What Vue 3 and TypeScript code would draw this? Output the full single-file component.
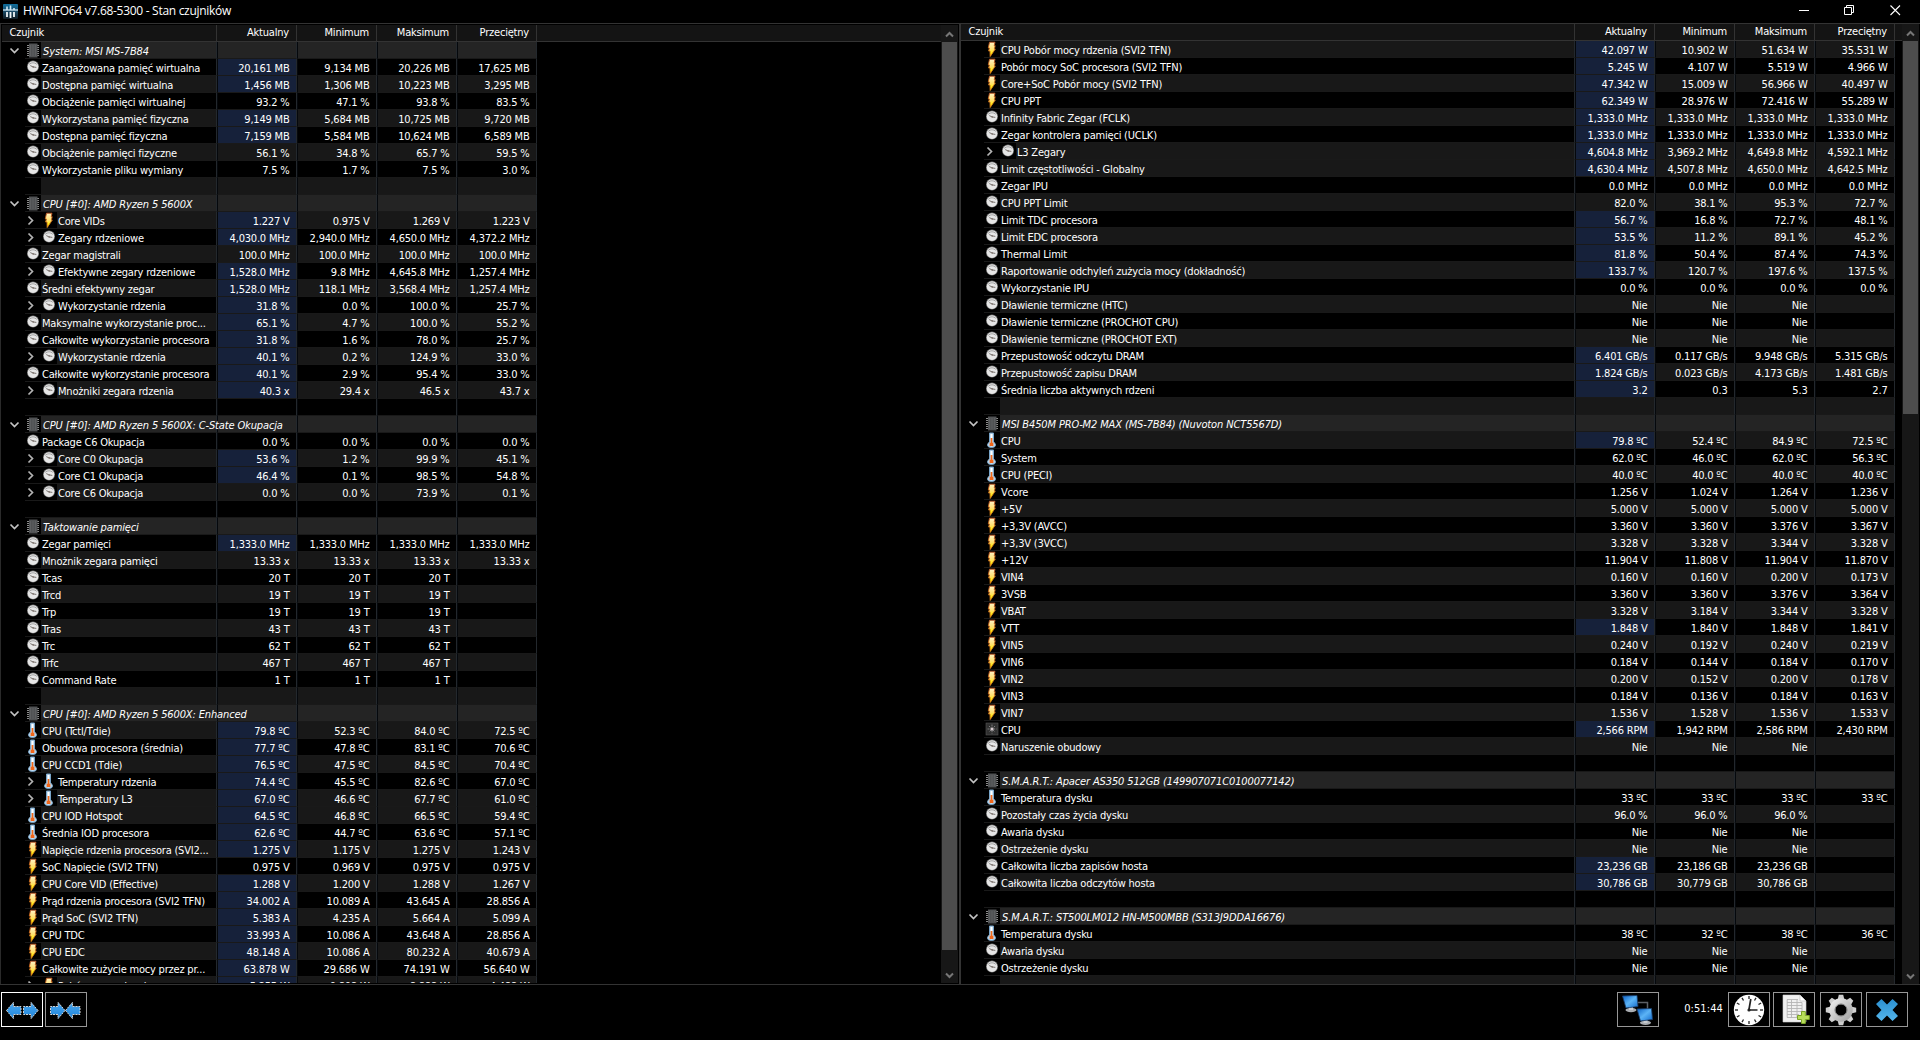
<script setup lang="ts">
type Kind = 'section' | 'clock' | 'bolt' | 'temp' | 'fan' | 'blank'
interface Row {
  kind: Kind
  name: string
  values: string[]
  hot: boolean
  child: boolean
  shade: 'dark' | 'light' | 'head'
}

const columns = ['Aktualny', 'Minimum', 'Maksimum', 'Przeciętny']
const kinds: Record<string, Kind> = { S: 'section', C: 'clock', B: 'bolt', T: 'temp', F: 'fan' }

// Line format: "<flags>|name|v1|v2|v3|v4"; flags: kind letter, ">" expandable, "*" highlighted value.
// An expandable group with an odd number of hidden children flips the striping below it.
function parse(source: string, flipFrom: number): Row[] {
  return source.trim().split('\n').map((line, i) => {
    const [flags, name = '', ...values] = line.trim().split('|')
    const kind: Kind = kinds[flags[0]] ?? 'blank'
    const even = (i >= flipFrom ? i + 1 : i) % 2 === 0
    return {
      kind,
      name,
      values: [0, 1, 2, 3].map(n => values[n] ?? ''),
      hot: flags.includes('*'),
      child: flags.includes('>'),
      shade: kind === 'section' ? 'head' : even ? 'light' : 'dark',
    }
  })
}

const left = parse(`
S|System: MSI MS-7B84
C*|Zaangażowana pamięć wirtualna|20,161 MB|9,134 MB|20,226 MB|17,625 MB
C*|Dostępna pamięć wirtualna|1,456 MB|1,306 MB|10,223 MB|3,295 MB
C|Obciążenie pamięci wirtualnej|93.2 %|47.1 %|93.8 %|83.5 %
C*|Wykorzystana pamięć fizyczna|9,149 MB|5,684 MB|10,725 MB|9,720 MB
C*|Dostępna pamięć fizyczna|7,159 MB|5,584 MB|10,624 MB|6,589 MB
C|Obciążenie pamięci fizyczne|56.1 %|34.8 %|65.7 %|59.5 %
C|Wykorzystanie pliku wymiany|7.5 %|1.7 %|7.5 %|3.0 %
-
S|CPU [#0]: AMD Ryzen 5 5600X
B>*|Core VIDs|1.227 V|0.975 V|1.269 V|1.223 V
C>*|Zegary rdzeniowe|4,030.0 MHz|2,940.0 MHz|4,650.0 MHz|4,372.2 MHz
C|Zegar magistrali|100.0 MHz|100.0 MHz|100.0 MHz|100.0 MHz
C>*|Efektywne zegary rdzeniowe|1,528.0 MHz|9.8 MHz|4,645.8 MHz|1,257.4 MHz
C*|Średni efektywny zegar|1,528.0 MHz|118.1 MHz|3,568.4 MHz|1,257.4 MHz
C>*|Wykorzystanie rdzenia|31.8 %|0.0 %|100.0 %|25.7 %
C*|Maksymalne wykorzystanie proc...|65.1 %|4.7 %|100.0 %|55.2 %
C*|Całkowite wykorzystanie procesora|31.8 %|1.6 %|78.0 %|25.7 %
C>*|Wykorzystanie rdzenia|40.1 %|0.2 %|124.9 %|33.0 %
C*|Całkowite wykorzystanie procesora|40.1 %|2.9 %|95.4 %|33.0 %
C>*|Mnożniki zegara rdzenia|40.3 x|29.4 x|46.5 x|43.7 x
-
S|CPU [#0]: AMD Ryzen 5 5600X: C-State Okupacja
C|Package C6 Okupacja|0.0 %|0.0 %|0.0 %|0.0 %
C>*|Core C0 Okupacja|53.6 %|1.2 %|99.9 %|45.1 %
C>*|Core C1 Okupacja|46.4 %|0.1 %|98.5 %|54.8 %
C>|Core C6 Okupacja|0.0 %|0.0 %|73.9 %|0.1 %
-
S|Taktowanie pamięci
C*|Zegar pamięci|1,333.0 MHz|1,333.0 MHz|1,333.0 MHz|1,333.0 MHz
C|Mnożnik zegara pamięci|13.33 x|13.33 x|13.33 x|13.33 x
C|Tcas|20 T|20 T|20 T
C|Trcd|19 T|19 T|19 T
C|Trp|19 T|19 T|19 T
C|Tras|43 T|43 T|43 T
C|Trc|62 T|62 T|62 T
C|Trfc|467 T|467 T|467 T
C|Command Rate|1 T|1 T|1 T
-
S|CPU [#0]: AMD Ryzen 5 5600X: Enhanced
T*|CPU (Tctl/Tdie)|79.8 ºC|52.3 ºC|84.0 ºC|72.5 ºC
T*|Obudowa procesora (średnia)|77.7 ºC|47.8 ºC|83.1 ºC|70.6 ºC
T*|CPU CCD1 (Tdie)|76.5 ºC|47.5 ºC|84.5 ºC|70.4 ºC
T>*|Temperatury rdzenia|74.4 ºC|45.5 ºC|82.6 ºC|67.0 ºC
T>*|Temperatury L3|67.0 ºC|46.6 ºC|67.7 ºC|61.0 ºC
T*|CPU IOD Hotspot|64.5 ºC|46.8 ºC|66.5 ºC|59.4 ºC
T*|Średnia IOD procesora|62.6 ºC|44.7 ºC|63.6 ºC|57.1 ºC
B*|Napięcie rdzenia procesora (SVI2...|1.275 V|1.175 V|1.275 V|1.243 V
B|SoC Napięcie (SVI2 TFN)|0.975 V|0.969 V|0.975 V|0.975 V
B*|CPU Core VID (Effective)|1.288 V|1.200 V|1.288 V|1.267 V
B*|Prąd rdzenia procesora (SVI2 TFN)|34.002 A|10.089 A|43.645 A|28.856 A
B*|Prąd SoC (SVI2 TFN)|5.383 A|4.235 A|5.664 A|5.099 A
B*|CPU TDC|33.993 A|10.086 A|43.648 A|28.856 A
B*|CPU EDC|48.148 A|10.086 A|80.232 A|40.679 A
B*|Całkowite zużycie mocy przez pr...|63.878 W|29.686 W|74.191 W|56.640 W
B>*|Pobór mocy rdzenia|5.255 W|0.808 W|8.888 W|4.488 W
`, 45)

const right = parse(`
B*|CPU Pobór mocy rdzenia (SVI2 TFN)|42.097 W|10.902 W|51.634 W|35.531 W
B*|Pobór mocy SoC procesora (SVI2 TFN)|5.245 W|4.107 W|5.519 W|4.966 W
B*|Core+SoC Pobór mocy (SVI2 TFN)|47.342 W|15.009 W|56.966 W|40.497 W
B*|CPU PPT|62.349 W|28.976 W|72.416 W|55.289 W
C*|Infinity Fabric Zegar (FCLK)|1,333.0 MHz|1,333.0 MHz|1,333.0 MHz|1,333.0 MHz
C*|Zegar kontrolera pamięci (UCLK)|1,333.0 MHz|1,333.0 MHz|1,333.0 MHz|1,333.0 MHz
C>*|L3 Zegary|4,604.8 MHz|3,969.2 MHz|4,649.8 MHz|4,592.1 MHz
C*|Limit częstotliwości - Globalny|4,630.4 MHz|4,507.8 MHz|4,650.0 MHz|4,642.5 MHz
C|Zegar IPU|0.0 MHz|0.0 MHz|0.0 MHz|0.0 MHz
C|CPU PPT Limit|82.0 %|38.1 %|95.3 %|72.7 %
C*|Limit TDC procesora|56.7 %|16.8 %|72.7 %|48.1 %
C*|Limit EDC procesora|53.5 %|11.2 %|89.1 %|45.2 %
C*|Thermal Limit|81.8 %|50.4 %|87.4 %|74.3 %
C*|Raportowanie odchyleń zużycia mocy (dokładność)|133.7 %|120.7 %|197.6 %|137.5 %
C|Wykorzystanie IPU|0.0 %|0.0 %|0.0 %|0.0 %
C|Dławienie termiczne (HTC)|Nie|Nie|Nie
C|Dławienie termiczne (PROCHOT CPU)|Nie|Nie|Nie
C|Dławienie termiczne (PROCHOT EXT)|Nie|Nie|Nie
C*|Przepustowość odczytu DRAM|6.401 GB/s|0.117 GB/s|9.948 GB/s|5.315 GB/s
C*|Przepustowość zapisu DRAM|1.824 GB/s|0.023 GB/s|4.173 GB/s|1.481 GB/s
C*|Średnia liczba aktywnych rdzeni|3.2|0.3|5.3|2.7
-
S|MSI B450M PRO-M2 MAX (MS-7B84) (Nuvoton NCT5567D)
T*|CPU|79.8 ºC|52.4 ºC|84.9 ºC|72.5 ºC
T|System|62.0 ºC|46.0 ºC|62.0 ºC|56.3 ºC
T|CPU (PECI)|40.0 ºC|40.0 ºC|40.0 ºC|40.0 ºC
B|Vcore|1.256 V|1.024 V|1.264 V|1.236 V
B|+5V|5.000 V|5.000 V|5.000 V|5.000 V
B|+3,3V (AVCC)|3.360 V|3.360 V|3.376 V|3.367 V
B|+3,3V (3VCC)|3.328 V|3.328 V|3.344 V|3.328 V
B|+12V|11.904 V|11.808 V|11.904 V|11.870 V
B|VIN4|0.160 V|0.160 V|0.200 V|0.173 V
B|3VSB|3.360 V|3.360 V|3.376 V|3.364 V
B|VBAT|3.328 V|3.184 V|3.344 V|3.328 V
B*|VTT|1.848 V|1.840 V|1.848 V|1.841 V
B|VIN5|0.240 V|0.192 V|0.240 V|0.219 V
B|VIN6|0.184 V|0.144 V|0.184 V|0.170 V
B|VIN2|0.200 V|0.152 V|0.200 V|0.178 V
B|VIN3|0.184 V|0.136 V|0.184 V|0.163 V
B|VIN7|1.536 V|1.528 V|1.536 V|1.533 V
F*|CPU|2,566 RPM|1,942 RPM|2,586 RPM|2,430 RPM
C|Naruszenie obudowy|Nie|Nie|Nie
-
S|S.M.A.R.T.: Apacer AS350 512GB (149907071C0100077142)
T|Temperatura dysku|33 ºC|33 ºC|33 ºC|33 ºC
C|Pozostały czas życia dysku|96.0 %|96.0 %|96.0 %
C|Awaria dysku|Nie|Nie|Nie
C|Ostrzeżenie dysku|Nie|Nie|Nie
C*|Całkowita liczba zapisów hosta|23,236 GB|23,186 GB|23,236 GB
C*|Całkowita liczba odczytów hosta|30,786 GB|30,779 GB|30,786 GB
-
S|S.M.A.R.T.: ST500LM012 HN-M500MBB (S313J9DDA16676)
T|Temperatura dysku|38 ºC|32 ºC|38 ºC|36 ºC
C|Awaria dysku|Nie|Nie|Nie
C|Ostrzeżenie dysku|Nie|Nie|Nie
-
`, 7)

const panes = [
  { id: 'left', rows: left },
  { id: 'right', rows: right },
]
const ticks = Array.from({ length: 12 }, (_, i) => i * 30)
const teeth = Array.from({ length: 8 }, (_, i) => i * 45)
</script>

<template>
  <div class="window">
    <svg class="defs" width="0" height="0">
      <defs>
        <linearGradient id="gBolt" x1="0" y1="0" x2="0" y2="1">
          <stop offset="0" stop-color="#fff3c4" /><stop offset=".5" stop-color="#ffe070" /><stop offset=".8" stop-color="#fff000" /><stop offset="1" stop-color="#f08a10" />
        </linearGradient>
        <linearGradient id="gBoltEdge" x1="0" y1="0" x2="0" y2="1">
          <stop offset="0" stop-color="#b9501e" /><stop offset="1" stop-color="#e08a18" />
        </linearGradient>
        <linearGradient id="gArrow" x1="0" y1="0" x2="0" y2="1">
          <stop offset="0" stop-color="#4aa6ee" /><stop offset="1" stop-color="#1f86dc" />
        </linearGradient>
        <linearGradient id="gScreen" x1="0" y1="0" x2="1" y2="1">
          <stop offset="0" stop-color="#0a5fc4" /><stop offset=".5" stop-color="#5cb4f6" /><stop offset="1" stop-color="#1169cc" />
        </linearGradient>
        <linearGradient id="gLogo" x1="0" y1="0" x2="0" y2="1">
          <stop offset="0" stop-color="#0f6f9e" /><stop offset=".5" stop-color="#1a4a66" /><stop offset="1" stop-color="#101c24" />
        </linearGradient>
        <linearGradient id="gGear" x1="0" y1="0" x2="1" y2="1">
          <stop offset="0" stop-color="#e8e8e8" /><stop offset="1" stop-color="#a8a8a8" />
        </linearGradient>
        <linearGradient id="gClose" x1="0" y1="0" x2="0" y2="1">
          <stop offset="0" stop-color="#2a8fd0" /><stop offset="1" stop-color="#55b6ec" />
        </linearGradient>
        <symbol id="section" viewBox="0 0 16 16">
          <path d="M2 3.5h12M2 5.5h12M2 7.5h12M2 9.5h12M2 11.5h12M2 13.5h12" stroke="#8b8b8b" />
          <rect x="4" y="1.5" width="8.5" height="14" fill="#505254" />
          <path d="M5.5 3v11M8 3v11M10.5 3v11" stroke="#5d5f61" />
        </symbol>
        <symbol id="clock" viewBox="0 0 16 16">
          <circle cx="8" cy="7.6" r="6" fill="#777" />
          <circle cx="8" cy="7.6" r="5.3" fill="#e6e6e6" />
          <path d="M4.2 5.3Q8 2.2 11.8 5.3" fill="none" stroke="#909090" stroke-width=".8" />
          <path d="M5.3 6.6l2.7 1.3 3.3.5" fill="none" stroke="#6a6460" stroke-width=".9" />
          <circle cx="8.2" cy="8" r=".8" fill="#7a6c66" />
        </symbol>
        <symbol id="bolt" viewBox="0 0 16 16">
          <path d="M5.5 1.2h5.5l-.8 3.500h1l-.9 3.300h1L6.200 15.500 6 10H4.600l.9-3H4.300z" fill="url(#gBolt)" stroke="url(#gBoltEdge)" stroke-width=".9" />
        </symbol>
        <symbol id="temp" viewBox="0 0 16 16">
          <path d="M5.5 1h4v9q2 1.200 2 3 0 2.500-4 2.500t-4-2.500q0-1.800 2-3z" fill="#c4def2" stroke="#78a4c8" stroke-width="1" />
          <path d="M7.5 2v4" stroke="#fff" stroke-width="1.5" />
          <path d="M7.5 6v6.500" stroke="#f26a1b" stroke-width="1.700" />
          <path d="M5.600 10.800h3.800v3.200h-3.800z" fill="#f0661a" />
        </symbol>
        <symbol id="fan" viewBox="0 0 16 16">
          <rect x="2" y="2" width="12" height="12" fill="#303030" stroke="#555" stroke-width=".6" />
          <path d="M8 3.5v9M3.5 8h9M5 5l6 6M11 5l-6 6" stroke="#858585" stroke-width=".9" stroke-dasharray="2 .8" />
          <circle cx="8" cy="8" r="1.5" fill="#d8ccd0" />
        </symbol>
      </defs>
    </svg>

    <header class="titlebar">
      <svg class="logo" width="15" height="15" viewBox="0 0 15 15">
        <rect width="15" height="15" rx="1" fill="url(#gLogo)" />
        <path d="M0 6h15" stroke="#d8eef8" stroke-width="1.2" />
        <path d="M4 2.5v3.5M7.5 1.5v4.5M11 4v2" stroke="#cfe9f6" stroke-width="1.6" />
        <path d="M4 8v5M7.5 8v6M11 8v5" stroke="#eef4f7" stroke-width="1.8" />
      </svg>
      <span class="title">HWiNFO64 v7.68-5300 - Stan czujników</span>
      <div class="controls">
        <svg width="46" height="23" viewBox="0 0 46 23"><path d="M18 10.500h10" stroke="#fff" /></svg>
        <svg width="46" height="23" viewBox="0 0 46 23"><path d="M17.500 7.500h7v7h-7zM19.500 7v-1.500h7v7h-2" fill="none" stroke="#fff" /></svg>
        <svg width="46" height="23" viewBox="0 0 46 23"><path d="M17.500 5.500l9.500 9.500M27 5.500l-9.500 9.500" stroke="#fff" stroke-width="1.100" /></svg>
      </div>
    </header>

    <main class="panes">
      <section v-for="pane in panes" :key="pane.id" class="pane" :class="pane.id">
        <div class="list">
          <div class="head">
            <div class="hname">Czujnik</div>
            <div v-for="c in columns" :key="c" class="hcell">{{ c }}</div>
          </div>
          <div class="rows">
            <div v-for="(r, i) in pane.rows" :key="i" class="row" :class="[r.shade, { child: r.child }]">
              <div class="first">
                <div class="gutter">
                  <svg v-if="r.kind === 'section'" width="11" height="8" viewBox="0 0 11 8"><path d="M1.5 1.5l4 4 4-4" fill="none" stroke="#c4c4c4" stroke-width="1.7" /></svg>
                </div>
                <div v-if="r.child" class="expander">
                  <svg width="8" height="11" viewBox="0 0 8 11"><path d="M1.5 1.5l4 4-4 4" fill="none" stroke="#b4b4b4" stroke-width="1.7" /></svg>
                </div>
                <div class="icon"><svg v-if="r.kind !== 'blank'" width="16" height="16"><use :href="'#' + r.kind" /></svg></div>
                <div class="name" :class="{ italic: r.kind === 'section' }"><span>{{ r.name }}</span></div>
              </div>
              <div v-for="(v, k) in r.values" :key="k" class="cell" :class="{ hot: k === 0 && r.hot }">{{ v }}</div>
            </div>
          </div>
        </div>
        <div class="scrollbar">
          <svg class="arrow" width="9" height="7" viewBox="0 0 9 7"><path d="M1 5.5l3.5-3.5 3.5 3.5" fill="none" stroke="#777" stroke-width="2" /></svg>
          <div class="track"><div class="thumb"></div></div>
          <svg class="arrow" width="9" height="7" viewBox="0 0 9 7"><path d="M1 1.5l3.5 3.5 3.5-3.5" fill="none" stroke="#777" stroke-width="2" /></svg>
        </div>
      </section>
    </main>

    <footer class="toolbar">
      <button class="btn focused">
        <svg width="40" height="33" viewBox="0 0 40 33">
          <path d="M4.500 17.500l7-8.200v4.200H19v8h-7.500v4.200zM36 17.500l-7-8.200v4.200h-7.500v8H29v4.200z" fill="url(#gArrow)" stroke="#d4d4d4" stroke-dasharray="2 1" />
        </svg>
      </button>
      <button class="btn second">
        <svg width="40" height="33" viewBox="0 0 40 33">
          <path d="M19 17.500l-7-8.200v4.200H4.500v8H12v4.200zM19.500 17.500l7-8.200v4.200H34v8h-7.500v4.200z" fill="url(#gArrow)" stroke="#d4d4d4" stroke-dasharray="2 1" />
        </svg>
      </button>
      <button class="btn net">
        <svg width="40" height="33" viewBox="0 0 40 33">
          <path d="M19 9.500h10.500v8" fill="none" stroke="#5c6066" stroke-width="1.5" />
          <ellipse cx="13" cy="17" rx="5.500" ry="2.200" fill="#a9adb2" /><path d="M11 13h4v4h-4z" fill="#c9ccd0" />
          <path d="M4.500 3l14.500-.5 1 11-12 1.500z" fill="url(#gScreen)" stroke="#1a3c68" stroke-width=".8" />
          <ellipse cx="27.500" cy="29.800" rx="5.500" ry="2.200" fill="#a9adb2" /><path d="M25.500 26h4v4h-4z" fill="#c9ccd0" />
          <path d="M19 16l14.500-.5 1 11-12 1.500z" fill="url(#gScreen)" stroke="#1a3c68" stroke-width=".8" />
        </svg>
      </button>
      <span class="elapsed">0:51:44</span>
      <button class="btn timer">
        <svg width="40" height="33" viewBox="0 0 40 33">
          <circle cx="20" cy="17" r="15.2" fill="#fff" />
          <path v-for="a in ticks" :key="a" d="M20 3v3" stroke="#222" stroke-width="1.3" :transform="`rotate(${a} 20 17)`" />
          <path d="M19.800 17.500L21.800 6M20 17h8.500" fill="none" stroke="#222" stroke-width="1.7" /><circle cx="20" cy="17" r="1.6" fill="#222" />
        </svg>
      </button>
      <button class="btn report">
        <svg width="40" height="33" viewBox="0 0 40 33">
          <path d="M9 2h17l6 6v21H9z" fill="#f0f0f0" stroke="#d0d0d0" stroke-width=".6" />
          <path d="M26 2v6h6z" fill="#fff" stroke="#bbb" stroke-width=".6" />
          <path d="M13 6.500h11M13 9.500h15M13 12.500h15M13 15.500h15M13 18.500h15M13 21.500h12M13 24.500h11M13.200 6.500v18M17.500 6.500v18M23 6.500v18M28 9.500v9" fill="none" stroke="#b4b4b4" stroke-width=".9" />
          <path d="M27.500 18.500h3.800v4h4v4h-4v4h-3.800v-4h-4v-4h4z" fill="#b7dd5a" stroke="#7aa325" />
        </svg>
      </button>
      <button class="btn settings">
        <svg width="40" height="33" viewBox="0 0 40 33">
          <path v-for="a in teeth" :key="a" d="M16.500 7l1.300-5.200h4.400l1.300 5.200z" fill="#cfcfcf" :transform="`rotate(${a} 20 17)`" />
          <circle cx="20" cy="17" r="8.7" fill="none" stroke="url(#gGear)" stroke-width="6" />
          <circle cx="20" cy="17" r="6" fill="none" stroke="#777" stroke-width="1" />
        </svg>
      </button>
      <button class="btn exit">
        <svg width="40" height="33" viewBox="0 0 40 33">
          <path d="M14.500 6l5.500 5.500L25.500 6l5.500 5-5.500 6 5.500 6-5.500 5-5.500-5.500-5.500 5.500L9 23l5.500-6L9 11z" fill="url(#gClose)" />
        </svg>
      </button>
    </footer>
  </div>
</template>

<style>
body { margin: 0; background: #000; overflow: hidden; }
</style>

<style scoped>
.window {
  width: 1920px;
  height: 1040px;
  background: #000;
  color: #fff;
  overflow: hidden;
  display: flex;
  flex-direction: column;
  font: 11px/17px "DejaVu Sans Condensed", "DejaVu Sans", sans-serif;
  font-stretch: condensed;
  letter-spacing: -0.2px;
}
.defs { position: absolute; }
.titlebar {
  height: 23px;
  flex: none;
  display: flex;
  border-bottom: 1px solid #333;
}
.logo { margin: 4px 5px 0 3px; }
.title {
  flex: 1;
  font: 12px/22px "Open Sans", "Noto Sans", sans-serif;
  letter-spacing: -0.29px;
}
.controls { display: flex; margin-right: 1px; }
.panes { flex: none; height: 960px; display: flex; border-bottom: 1px solid #333; }
.pane { display: flex; box-sizing: border-box; height: 960px; }
.pane.left { width: 959px; border-left: 1px solid #2a2a2a; padding: 1px 0 1px 1px; }
.pane.right { width: 961px; border-left: 2px solid #333; }
.list { flex: 1; min-width: 0; display: flex; flex-direction: column; overflow: hidden; }
.head {
  height: 16px;
  flex: none;
  display: flex;
  background: #141414;
  border-bottom: 1px solid #333;
  line-height: 15px;
}
.hname, .first { width: 215px; flex: none; box-sizing: border-box; }
.right .hname, .right .first { width: 614px; }
.hname { padding-left: 7.500px; border-right: 1px solid #333; }
.hcell {
  width: 80px;
  box-sizing: border-box;
  padding-right: 7px;
  text-align: right;
  border-right: 1px solid #333;
}
.rows { flex: 1; min-height: 0; overflow: hidden; }
.row { display: flex; height: 17px; }
.first { display: flex; }
.gutter { width: 23px; flex: none; display: flex; align-items: center; justify-content: center; }
.gutter svg { margin-left: 2px; }
.expander, .icon { width: 16px; flex: none; box-sizing: border-box; border-bottom: 1px solid #191919; height: 17px; }
.expander { padding: 3px 0 0 2px; }
.expander svg, .icon svg { display: block; }
.name {
  flex: 1;
  min-width: 0;
  box-sizing: border-box;
  height: 17px;
  padding-left: 1px;
  white-space: nowrap;
  border-bottom: 1px solid #191919;
  border-right: 1px solid #23282d;
  line-height: 19px;
}
.name.italic span { position: relative; z-index: 1; font-style: italic; letter-spacing: -0.13px; padding-left: 1px; }
.cell {
  width: 80px;
  height: 17px;
  box-sizing: border-box;
  padding-right: 6.500px;
  text-align: right;
  line-height: 19px;
  white-space: pre;
  border-left: 1px solid #05080c;
  border-right: 1px solid #23282d;
  border-bottom: 1px solid #191919;
}
.light .name, .light .cell { background: #181818; }
.row.head { background: none; border: 0; height: 17px; }
.row.head .name, .row.head .cell { background: #242424; }
.row .cell.hot { background: #16213a; }
.scrollbar {
  width: 17px;
  flex: none;
  background: #171717;
  display: flex;
  flex-direction: column;
  align-items: center;
}
.left .scrollbar { margin-right: 1px; }
.right .scrollbar { margin-right: 1px; }
.arrow { margin: 6px 0 4px; flex: none; }
.track { flex: 1; width: 15px; }
.thumb { background: #4d4d4d; width: 15px; }
.left .thumb { height: 908px; }
.right .thumb { height: 373px; }
.toolbar { flex: 1; display: flex; padding: 7px 12px 0 1px; align-items: flex-start; }
.btn {
  width: 42px;
  height: 35px;
  box-sizing: border-box;
  padding: 0;
  border: 1px solid #979797;
  background: #000;
  flex: none;
}
.btn svg { display: block; }
.btn.focused { border-color: #fff; }
.btn.second { margin-left: 2px; }
.btn.net { margin-left: auto; }
.elapsed { width: 69px; text-align: right; box-sizing: border-box; padding-right: 5px; line-height: 33px; letter-spacing: 0.1px; }
.btn.report { margin-left: 3px; }
.btn.settings { margin-left: 5px; }
.btn.exit { margin-left: 4px; }
</style>
